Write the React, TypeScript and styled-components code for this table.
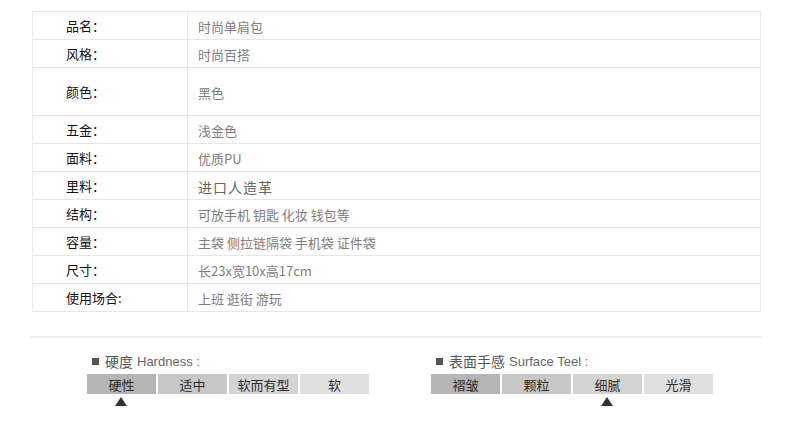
import React from 'react';
import styled, { createGlobalStyle } from 'styled-components';

const GlobalStyle = createGlobalStyle`
  html, body {
    margin: 0;
    padding: 0;
    background: #fff;
  }
  body {
    font-family: 'Noto Sans CJK SC', 'Liberation Sans', sans-serif;
  }
`;

const Page = styled.div`
  width: 790px;
  height: 434px;
  overflow: hidden;
  padding-top: 11px;
  box-sizing: border-box;
`;

const Table = styled.div`
  margin-left: 32px;
  width: 727px;
  border: 1px solid #e9e9e9;
  border-bottom: none;
`;

const Row = styled.div<{ $tall?: boolean }>`
  display: grid;
  grid-template-columns: 155px 1fr;
  height: ${(p) => (p.$tall ? 48 : 28)}px;
  border-bottom: 1px solid #e6e6e6;
  box-sizing: border-box;
`;

const Label = styled.div`
  display: flex;
  align-items: center;
  padding-left: 33px;
  border-right: 1px solid #e9e9e9;
  font-size: 13px;
  color: #111;
`;

const Value = styled.div<{ $serif?: boolean }>`
  display: flex;
  align-items: center;
  padding-left: 10px;
  padding-top: 2px;
  font-size: ${(p) => (p.$serif ? '14px' : '13px')};
  color: ${(p) => (p.$serif ? '#666' : '#7d7d7d')};
  letter-spacing: ${(p) => (p.$serif ? '1px' : '0')};
`;

const Divider = styled.div`
  margin: 24px 0 0 30px;
  width: 733px;
  height: 2px;
  background: #eeeeee;
`;

const Scales = styled.div`
  display: flex;
  gap: 62px;
  padding: 12px 0 0 87px;
`;

const Group = styled.div`
  display: flex;
  flex-direction: column;
`;

const Title = styled.div`
  display: flex;
  align-items: center;
  height: 22px;
  padding-left: 5px;
  font-size: 14px;
  color: #555;
`;

const Bullet = styled.span`
  width: 7px;
  height: 7px;
  background: #555;
  margin-right: 6px;
`;

const English = styled.span`
  font-family: 'Liberation Sans', sans-serif;
  font-size: 13px;
  color: #666;
  margin-left: 4px;
`;

const Steps = styled.div`
  display: flex;
  gap: 2px;
  margin-top: 2px;
`;

const Step = styled.div<{ $shade: string }>`
  width: 69px;
  height: 20px;
  display: flex;
  align-items: center;
  justify-content: center;
  background: ${(p) => p.$shade};
  font-size: 13px;
  color: #2c2c2c;
`;

const Marker = styled.div<{ $index: number }>`
  margin-top: 3px;
  margin-left: ${(p) => p.$index * 71 + 28}px;
  width: 0;
  height: 0;
  border-left: 6px solid transparent;
  border-right: 6px solid transparent;
  border-bottom: 9px solid #333;
`;

const shades = ['#b5b5b5', '#c8c8c8', '#d4d4d4', '#e0e0e0'];

const rows = [
  { label: '品名：', value: '时尚单肩包' },
  { label: '风格：', value: '时尚百搭' },
  { label: '颜色：', value: '黑色', tall: true },
  { label: '五金：', value: '浅金色' },
  { label: '面料：', value: '优质PU' },
  { label: '里料：', value: '进口人造革', serif: true },
  { label: '结构：', value: '可放手机 钥匙 化妆 钱包等' },
  { label: '容量：', value: '主袋 侧拉链隔袋 手机袋 证件袋' },
  { label: '尺寸：', value: '长23x宽10x高17cm' },
  { label: '使用场合:', value: '上班 逛街 游玩' },
];

const scales = [
  { cn: '硬度', en: 'Hardness :', steps: ['硬性', '适中', '软而有型', '软'], pick: 0 },
  { cn: '表面手感', en: 'Surface Teel :', steps: ['褶皱', '颗粒', '细腻', '光滑'], pick: 2 },
];

export default function App() {
  return (
    <Page>
      <GlobalStyle />
      <Table>
        {rows.map((r) => (
          <Row key={r.label} $tall={r.tall}>
            <Label>{r.label}</Label>
            <Value $serif={r.serif}>{r.value}</Value>
          </Row>
        ))}
      </Table>
      <Divider />
      <Scales>
        {scales.map((s) => (
          <Group key={s.cn}>
            <Title>
              <Bullet />
              {s.cn}
              <English>{s.en}</English>
            </Title>
            <Steps>
              {s.steps.map((t, i) => (
                <Step key={t} $shade={shades[i]}>
                  {t}
                </Step>
              ))}
            </Steps>
            <Marker $index={s.pick} />
          </Group>
        ))}
      </Scales>
    </Page>
  );
}
